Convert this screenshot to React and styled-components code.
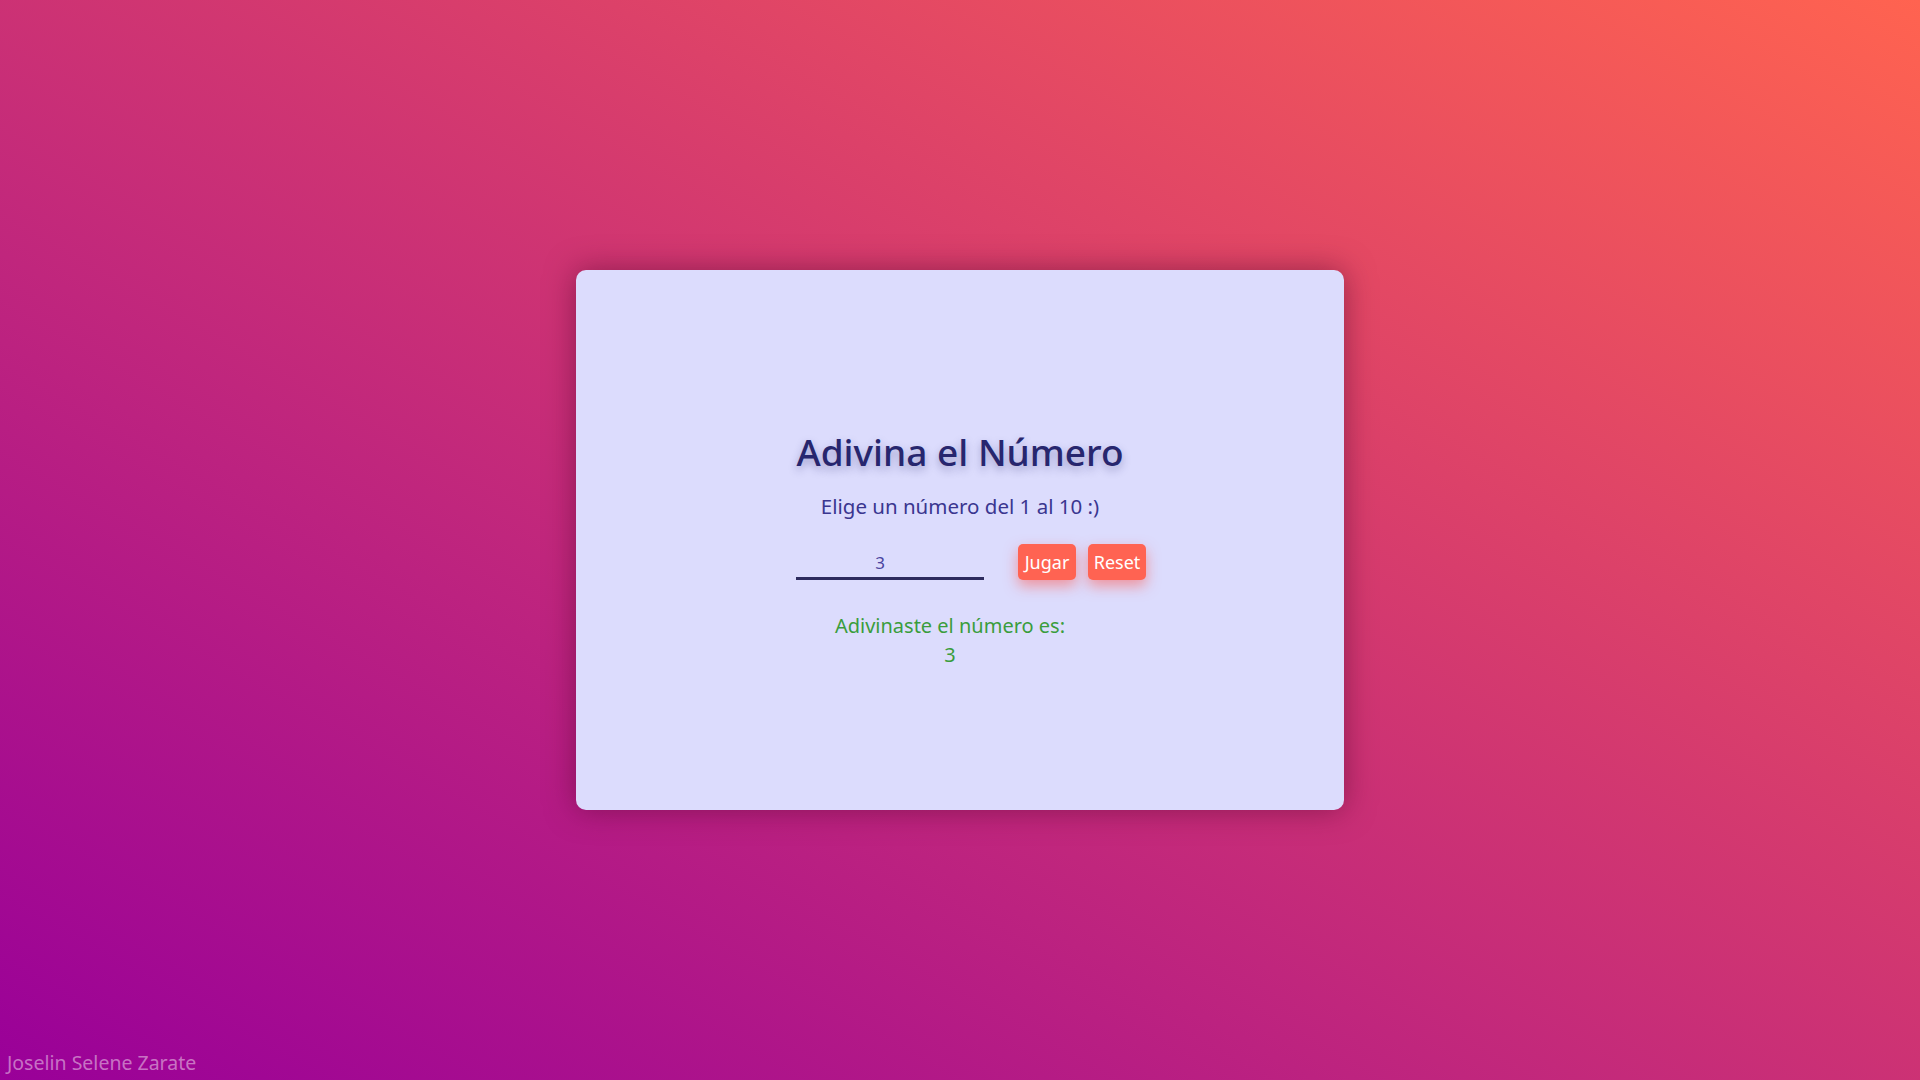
import React, { useState } from "react"
import styled, { createGlobalStyle } from "styled-components"

const GlobalStyle = createGlobalStyle`
  * { box-sizing: border-box; }
  html, body { margin: 0; padding: 0; }
  body {
    font-family: "Noto Sans", "Open Sans", sans-serif;
    background: linear-gradient(to top right, #990099 0%, #ff6350 100%);
    min-height: 100vh;
  }
`

const App = () => {
  const [value, setValue] = useState("3")
  const [result, setResult] = useState("3")

  return (
    <>
      <GlobalStyle />
      <Page>
        <Main>
          <Card>
            <Title>Adivina el Número</Title>
            <Subtitle>Elige un número del 1 al 10 :)</Subtitle>
            <FormRow>
              <NumberInput
                type="text"
                value={value}
                onChange={(e) => setValue(e.target.value)}
              />
              <Buttons>
                <Button onClick={() => setResult(value)}>Jugar</Button>
                <Button onClick={() => { setValue(""); setResult(null) }}>Reset</Button>
              </Buttons>
            </FormRow>
            {result !== null && (
              <Result>
                Adivinaste el número es:
                <ResultNumber>{result}</ResultNumber>
              </Result>
            )}
          </Card>
        </Main>
        <Footer>Joselin Selene Zarate</Footer>
      </Page>
    </>
  )
}

const Page = styled.div`
  width: 100vw;
  height: 100vh;
  display: flex;
  flex-direction: column;
`

const Main = styled.main`
  flex: 1;
  display: flex;
  justify-content: center;
  align-items: center;
  padding-top: 30px;
`

const Card = styled.section`
  width: 768px;
  height: 540px;
  background: #dcdcfd;
  border-radius: 10px;
  box-shadow: 0 0 30px rgba(90, 10, 50, 0.55);
  display: flex;
  flex-direction: column;
  align-items: center;
  padding-top: 158px;
`

const Title = styled.h1`
  margin: 0;
  font-size: 37px;
  font-weight: 500;
  line-height: 48px;
  color: #27266e;
  text-shadow: 0 4px 8px rgba(40, 40, 110, 0.35);
`

const Subtitle = styled.p`
  margin: 16px 0 0;
  font-size: 20.5px;
  line-height: 28px;
  color: #3a3690;
`

const FormRow = styled.div`
  display: flex;
  align-items: flex-end;
  gap: 34px;
  margin: 24px 0 0 22px;
`

const NumberInput = styled.input`
  width: 188px;
  height: 36px;
  border: none;
  border-bottom: 3px solid #2d2b5e;
  background: transparent;
  text-align: center;
  font-family: inherit;
  font-size: 17px;
  color: #4a44a0;
  outline: none;
  padding: 4px 20px 0 0;
`

const Buttons = styled.div`
  display: flex;
  gap: 12px;
`

const Button = styled.button`
  width: 58px;
  height: 36px;
  border: none;
  border-radius: 5px;
  background: #ff6352;
  color: #fff;
  font-family: inherit;
  font-size: 18px;
  padding: 0;
  cursor: pointer;
  box-shadow: 0 6px 14px rgba(255, 90, 80, 0.55);
`

const Result = styled.p`
  margin: 31px 20px 0 0;
  text-align: center;
  font-size: 20px;
  line-height: 29px;
  color: #3a9d3c;
`

const ResultNumber = styled.span`
  display: block;
`

const Footer = styled.footer`
  padding: 0 0 4px 7px;
  font-size: 19.5px;
  line-height: 26px;
  color: rgba(255, 255, 255, 0.45);
`

export default App
